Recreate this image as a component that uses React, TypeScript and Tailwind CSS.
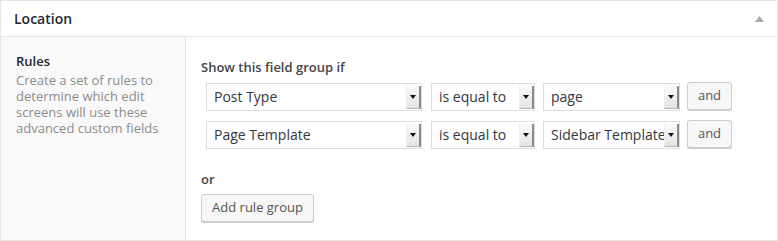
import React from "react";

function Select({ label, width }: { label: string; width: string }) {
  return (
    <div
      className={`${width} h-[28px] border border-[#dddddd] bg-white flex items-center relative overflow-hidden`}
    >
      <span className="pl-[7px] text-[14px] text-[#32373c] whitespace-nowrap leading-[28px]">
        {label}
      </span>
      <div className="absolute right-0 top-[2px] bottom-[1px] w-[15px] bg-gradient-to-b from-[#fafafa] to-[#e4e4e4] border-r-[2px] border-r-[#8a8a8a] border-b border-b-[#b5b5b5] border-l border-l-[#eeeeee] flex items-center justify-center">
        <svg width="6" height="4" viewBox="0 0 6 4">
          <polygon points="0,0 6,0 3,4" fill="#111" />
        </svg>
      </div>
    </div>
  );
}

function Btn({ children, className = "" }: { children: React.ReactNode; className?: string }) {
  return (
    <div
      className={`h-[28px] border border-[#cccccc] bg-[#f7f7f7] rounded-[3px] flex items-center justify-center text-[13px] text-[#555555] shadow-[0_1px_0_#cccccc] ${className}`}
    >
      {children}
    </div>
  );
}

function Row({ field, value }: { field: string; value: string }) {
  return (
    <div className="flex items-start">
      <Select label={field} width="w-[216px]" />
      <div className="w-[9px]" />
      <Select label="is equal to" width="w-[104px]" />
      <div className="w-[8px]" />
      <Select label={value} width="w-[137px]" />
      <div className="w-[7px]" />
      <Btn className="w-[45px] -mt-[1px]">and</Btn>
    </div>
  );
}

export default function App() {
  return (
    <div
      className="w-[778px] h-[241px] border border-[#e5e5e5] bg-white flex flex-col"
      style={{ fontFamily: '"Open Sans", "Noto Sans", sans-serif' }}
    >
      <div className="h-[36px] border-b border-[#e5e5e5] flex items-center justify-between pl-[13px] pr-[13px] shrink-0">
        <span className="text-[14px] font-semibold text-[#23282d]">Location</span>
        <svg width="9" height="6" viewBox="0 0 9 6">
          <polygon points="4.5,0 9,6 0,6" fill="#aaaaaa" />
        </svg>
      </div>
      <div className="flex flex-1">
        <div className="w-[185px] bg-[#f9f9f9] border-r border-[#e1e1e1] pl-[15px] pr-[10px] pt-[16px]">
          <div className="text-[13px] leading-[16px] font-semibold text-[#23282d]">Rules</div>
          <p className="mt-[3px] text-[13px] leading-[16px] text-[#8c8c8c]">
            Create a set of rules to determine which edit screens will use these advanced custom fields
          </p>
        </div>
        <div className="flex-1 pl-[15px] pt-[22px]">
          <div className="text-[13px] leading-[16px] font-semibold text-[#444444]">
            Show this field group if
          </div>
          <div className="pl-[5px] mt-[8px] flex flex-col gap-[10px]">
            <Row field="Post Type" value="page" />
            <Row field="Page Template" value="Sidebar Template" />
          </div>
          <div className="mt-[22px] text-[13px] leading-[16px] font-semibold text-[#444444]">or</div>
          <Btn className="w-[113px] mt-[7px] text-[#333333]">Add rule group</Btn>
        </div>
      </div>
    </div>
  );
}
